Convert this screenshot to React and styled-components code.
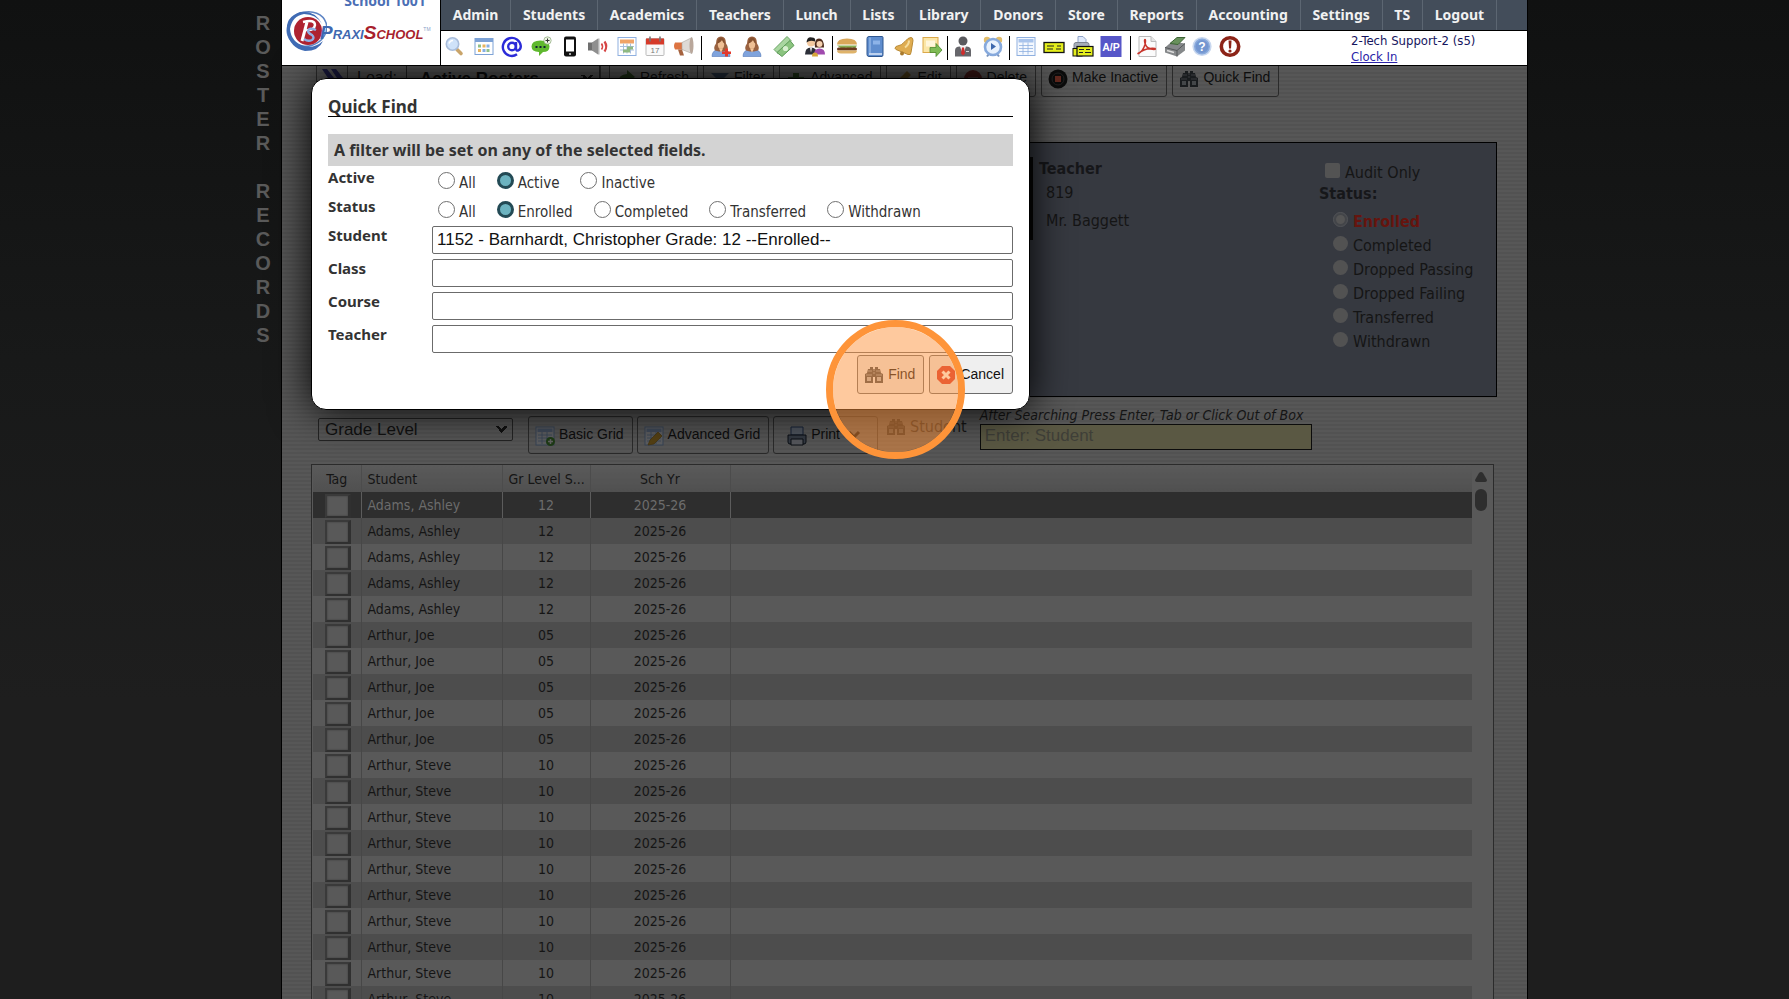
import React from "react";
import styled, { createGlobalStyle, css } from "styled-components";

const ui = `Tahoma, "DejaVu Sans Condensed", "Noto Sans", sans-serif`;
const uiBold = `"Noto Sans", Tahoma, sans-serif`;
const arial = `Arial, "Liberation Sans", sans-serif`;

const GlobalStyle = createGlobalStyle`
  * { box-sizing: border-box; }
  body {
    margin: 0;
    background: linear-gradient(#101111, #181919 360px, #1e1e1e 700px) no-repeat #1e1e1e;
    font-family: ${ui};
    font-size: 14px;
    color: #151515;
  }
  button, input, select { font-family: ${arial}; }
`;

/* ---------- page frame ---------- */

const Page = styled.div`
  display: flex;
  justify-content: center;
  height: 100vh;
  overflow: hidden;
`;

const Rail = styled.h1`
  flex: none;
  width: 32px;
  margin: 0;
  padding: 11px 10px 0 0;
  display: flex;
  flex-direction: column;
  align-items: flex-end;
  font: bold 20px/24px ${arial};
  color: #5a5a5a;
`;

const RailLetter = styled.span`
  width: 16px;
  height: 24px;
  text-align: center;
`;

const Shell = styled.div`
  position: relative;
  flex: 1 1 auto;
  max-width: 1247px;
  margin-right: 12px;
  border: solid #000;
  border-width: 0 1px;
  background: repeating-linear-gradient(#525252 0 2px, #575757 2px 4px);
`;

/* ---------- header ---------- */

const Header = styled.header`
  position: relative;
  z-index: 2;
  display: flex;
  height: 66px;
  background: #fff;
  border-bottom: 1px solid #000;
`;

const Brand = styled.a`
  flex: none;
  width: 159px;
  border-right: 1px solid #000;
  overflow: hidden;
  text-decoration: none;
  display: flex;
  flex-direction: column;
`;

const School = styled.span`
  margin-top: -8px;
  padding-left: 48px;
  text-align: center;
  font: bold 14px/17px ${uiBold};
  color: #4b6fb5;
`;

const LogoRow = styled.span`
  display: flex;
  align-items: center;
  padding-left: 3px;
`;

const Wordmark = styled.span`
  margin-left: -7px;
  padding-top: 2px;
  font: italic bold 19px/20px ${arial};
  font-variant: small-caps;
  color: #3f68b0;
  white-space: nowrap;
`;

const WordmarkRed = styled.span`
  color: #a81f2d;
`;

const Trade = styled.sup`
  font: 5px/6px ${arial};
  color: #8aa0c8;
  vertical-align: 8px;
`;

const HeaderMain = styled.div`
  flex: 1;
  min-width: 0;
`;

const Menu = styled.nav`
  display: flex;
  height: 31px;
  padding-right: 30px;
  background: #434d5a;
  border-bottom: 1px solid #000;
`;

const MenuLink = styled.a`
  flex: 1 1 auto;
  padding: 0 11px;
  border-right: 1px solid #5c6672;
  font: bold 14px/30px ${uiBold};
  text-align: center;
  color: #f1f1f1;
  text-decoration: none;
  white-space: nowrap;
`;

const Tools = styled.div`
  display: flex;
  align-items: flex-start;
  height: 34px;
  padding: 5px 0 0 4px;
`;

const ToolGroup = styled.div`
  display: flex;
  justify-content: space-between;
  width: ${(p) => p.$width}px;
`;

const ToolButton = styled.button`
  width: 20px;
  height: 21px;
  padding: 0;
  border: 0;
  background: none;
  svg { display: block; width: 20px; height: 21px; overflow: visible; }
`;

const Divider = styled.span`
  width: 1px;
  height: 24px;
  margin: 0 ${(p) => p.$after}px 0 ${(p) => p.$before}px;
  background: #000;
`;

const Account = styled.div`
  margin: -3px 0 0 111px;
  font: 13px/16px ${ui};
  color: #15155e;
  white-space: nowrap;
`;

const ClockIn = styled.a`
  display: block;
  width: max-content;
  color: #2a22a8;
`;

/* ---------- record area ---------- */

const Content = styled.main`
  margin-top: -7px;
  padding: 0 30px 0 29px;
`;

const ActionBar = styled.div`
  display: flex;
  padding-left: 5px;
`;

const LoadBox = styled.div`
  display: flex;
  align-items: center;
  height: 38px;
  margin-right: 8px;
  border: 1px solid #2c2c2c;
  color: #111;
`;

const LoadArrow = styled.button`
  width: 31px;
  height: 36px;
  padding: 0;
  border: 0;
  border-right: 1px solid #2c2c2c;
  background: none;
  svg { display: block; width: 24px; height: 20px; margin: 0 auto; }
`;

const LoadLabel = styled.label`
  width: 58px;
  padding-left: 9px;
  font: 16px/20px ${arial};
`;

const chevron = css`
  appearance: none;
  background-color: transparent;
  background-image: linear-gradient(45deg, transparent 50%, #111 50% 72%, transparent 72%),
    linear-gradient(-45deg, transparent 50%, #111 50% 72%, transparent 72%);
  background-repeat: no-repeat;
  background-size: 7px 7px;
`;

const RosterSelect = styled.select`
  ${chevron}
  width: 194px;
  height: 26px;
  padding: 0 0 0 13px;
  border: 1px solid #222;
  background-position: right 11px center, right 5px center;
  font-size: 17px;
  font-weight: bold;
  color: #0c0c0c;
`;

const Buttons = styled.div`
  display: flex;
  gap: ${(p) => p.$gap}px;
`;

const Button = styled.button`
  display: flex;
  align-items: center;
  gap: 4px;
  height: ${(p) => (p.$bright ? 39 : 38)}px;
  padding-block: 0 2px;
  padding-inline: ${(p) => (p.$roomy ? "13px" : "6px 8px")};
  border: 1px solid ${(p) => (p.$bright ? "#6b6b6b" : "#2a2a2a")};
  border-radius: 3px;
  background: ${(p) => (p.$bright ? "#efefef" : "transparent")};
  font-size: 14px;
  line-height: 20px;
  color: ${(p) => (p.$bright ? "#111" : "#0d0d0d")};
  white-space: nowrap;
  svg {
    flex: none;
    width: 20px;
    height: 20px;
    filter: ${(p) => (p.$bright ? "none" : "brightness(0.38)")};
  }
  svg:first-child { margin-top: 3px; }
`;

const Panel = styled.section`
  display: grid;
  grid-template-columns: 1fr 286px 177px;
  margin-top: 45px;
  min-height: 255px;
  padding-top: 14px;
  border: 1px solid #000;
  background: #363940;
  font-size: 16px;
  line-height: 24px;
`;

const ClassColumn = styled.div`
  height: 83px;
  border-right: 3px solid #060606;
`;

const TeacherColumn = styled.div`
  padding-left: 6px;
`;

const PanelHeading = styled.h2`
  margin: 0;
  font: bold 16px/24px "DejaVu Sans Condensed", ${uiBold};
  color: #16171a;
`;

const TeacherLine = styled.p`
  margin: 0;
  padding: 0 0 4px 7px;
`;

const StatusColumn = styled.div`
  padding-top: 2px;
`;

const PanelCheck = styled.label`
  display: flex;
  align-items: flex-start;
  gap: 5px;
  height: 23px;
  padding-left: 6px;
  line-height: 28px;
`;

const DimBox = styled.input`
  appearance: none;
  width: 15px;
  height: 15px;
  margin: 4px 0 0;
  border-radius: 2px;
  background: #535353;
`;

const PanelRadio = styled.label`
  display: flex;
  align-items: center;
  gap: 5px;
  height: 24px;
  padding-left: 14px;
  font-weight: ${(p) => (p.$on ? "bold" : "normal")};
  color: ${(p) => (p.$on ? "#66140e" : "inherit")};
`;

const DimRadio = styled.input`
  appearance: none;
  width: 15px;
  height: 15px;
  margin: 0 0 6px;
  border-radius: 50%;
  background: #525252;
  &:checked {
    background: #555;
    border: 3px solid #434549;
    outline: 1px solid #505256;
    outline-offset: -1px;
  }
`;

const StatusList = styled.div`
  padding-top: 4px;
`;

/* ---------- grid controls ---------- */

const GridBar = styled.div`
  display: flex;
  align-items: flex-start;
  padding: 10px 0 10px 7px;
`;

const LevelSelect = styled.select`
  ${chevron}
  width: 195px;
  height: 23px;
  margin: 11px 15px 0 0;
  padding: 0 0 0 6px;
  border: 1px solid #242424;
  border-radius: 2px;
  background-position: right 10px center, right 4px center;
  font-size: 17px;
  line-height: 20px;
  color: #111;
`;

const GridButtons = styled(Buttons)`
  margin-top: 9px;
`;

const StudentTag = styled.span`
  display: flex;
  align-items: center;
  gap: 4px;
  margin: 8px 13px 0 8px;
  font-size: 16px;
  line-height: 24px;
  svg { width: 20px; height: 20px; filter: brightness(0.38); }
`;

const Search = styled.label`
  display: block;
  width: 332px;
  font: italic 14px/17px ${ui};
  white-space: nowrap;
`;

const SearchInput = styled.input`
  display: block;
  width: 100%;
  height: 26px;
  padding: 0 4px 2px;
  border: 1px solid #0c0c0c;
  background: #5a5843;
  font-size: 17px;
  &::placeholder { color: #3f3f38; opacity: 1; }
`;

const GridFrame = styled.div`
  display: flex;
  margin-right: 3px;
  padding-left: 1px;
  border: 1px solid #2b2b2b;
  background: #595959;
`;

const Table = styled.table`
  flex: 1;
  width: 0;
  table-layout: fixed;
  border-collapse: collapse;
  font-size: 14px;
`;

const Col = styled.col`
  width: ${(p) => (p.$w ? `${p.$w}px` : "auto")};
`;

const HeadCell = styled.th`
  height: 27px;
  padding: 0 6px;
  border-right: 1px solid #4c4c4c;
  background: linear-gradient(#5a5a5a, #505050);
  font-weight: normal;
  text-align: ${(p) => (p.$left ? "left" : "center")};
  white-space: nowrap;
  overflow: hidden;
  &:last-child { border-right: 0; }
`;

const Row = styled.tr`
  height: 26px;
  background: ${(p) => (p.$selected ? "#2e2e2e" : p.$alt ? "#4d4d4d" : "#595959")};
  color: ${(p) => (p.$selected ? "#6c6c6c" : "#151515")};
`;

const Cell = styled.td`
  height: 26px;
  padding: ${(p) => (p.$tight ? "0 0 0 12px" : "0 6px")};
  border-right: 1px solid ${(p) => (p.$selected ? "#5c5c5c" : "#474747")};
  text-align: ${(p) => (p.$left ? "left" : "center")};
  line-height: 24px;
  &:last-child { border-right: 0; }
`;

const TagBox = styled.input`
  appearance: none;
  display: block;
  width: 26px;
  height: 24px;
  margin: 2px 0 0;
  border: 2px solid #3a3a3a;
  border-right: 3px solid #303030;
  border-bottom-color: #303030;
  background: #595959;
  box-shadow: inset 0 0 2px #3a3a3a;
`;

const ScrollTrack = styled.div`
  width: 21px;
  padding: 7px 3px 0 0;
  display: flex;
  flex-direction: column;
  align-items: center;
  gap: 7px;
  svg { width: 12px; height: 10px; }
`;

const ScrollThumb = styled.div`
  width: 12px;
  height: 22px;
  border-radius: 6px;
  background: #2e2e2e;
`;

/* ---------- quick find dialog ---------- */

const Dialog = styled.form`
  position: absolute;
  z-index: 1;
  top: 78px;
  left: 29px;
  width: 719px;
  max-width: calc(100% - 58px);
  padding: 19px 16px 15px;
  border: 1px solid #000;
  border-radius: 15px;
  background: #fff;
  box-shadow: 0 0 40px #000;
  color: #333;
`;

const DialogTitle = styled.h2`
  margin: 0 0 17px;
  border-bottom: 1px solid #000;
  font: bold 17px/18px ${uiBold};
`;

const Notice = styled.p`
  margin: 0;
  padding: 0 6px;
  background: #d3d3d3;
  font: bold 16px/32px ${uiBold};
`;

const Field = styled.div`
  display: grid;
  grid-template-columns: 104px 1fr;
  height: ${(p) => (p.$choices ? 29 : 33)}px;
`;

const FieldName = styled.label`
  font: bold 15px/22px ${uiBold};
`;

const Choices = styled.div`
  display: flex;
  gap: 21px;
  padding: 4px 0 0 6px;
`;

const Choice = styled.label`
  display: flex;
  align-items: flex-start;
  gap: 4px;
  font-size: 15px;
  line-height: 27px;
`;

const Radio = styled.input`
  appearance: none;
  width: 17px;
  height: 17px;
  margin: 2px 0 0;
  border: 1px solid #6f6f6f;
  border-radius: 50%;
  background: #fff;
  &:checked {
    border: 3px solid #234a55;
    background: #6cb3c0;
  }
`;

const TextInput = styled.input`
  width: 100%;
  height: 28px;
  margin-top: 2px;
  padding: 0 4px;
  border: 1px solid #6b6b6b;
  border-radius: 2px;
  font-size: 17px;
  color: #111;
`;

const DialogActions = styled.div`
  display: flex;
  justify-content: flex-end;
  gap: 5px;
  margin-top: -1px;
`;

const ClickMarker = styled.div`
  position: absolute;
  right: 64px;
  bottom: -50px;
  width: 139px;
  height: 139px;
  border: 7px solid #fe9439;
  border-radius: 50%;
  background: rgba(253, 148, 62, 0.5);
  background-clip: padding-box;
  pointer-events: none;
`;

/* ---------- icons ---------- */

const Svg = ({ children, box = "0 0 20 20" }) => (
  <svg viewBox={box} aria-hidden="true">{children}</svg>
);

const Binoculars = () => (
  <Svg>
    <path d="M4 4h2V2h3v2h2V2h3v2h2l1 4 2 1v9h-8v-6H9v6H1V9l2-1z" fill="#43494f" />
    <path d="M3 12h4v4H3zM13 12h4v4h-4z" fill="#b4babf" />
    <path d="M4 6h4M12 6h4M2 10h6M12 10h6M9 5h2M9 8h2" stroke="#959ca3" />
  </Svg>
);

const Person = ({ plus }) => (
  <Svg>
    <path d="M1 20q0-6 6-7h6q6 1 6 7z" fill="#7fa3dc" stroke="#5478b8" strokeWidth=".6" />
    <path d="M4 14Q2 11 5 7 5 0 10 0t5 7q3 4 1 7l-4 1H8z" fill="#9a6240" />
    <ellipse cx="10" cy="8" rx="3.2" ry="4.2" fill="#eebf94" />
    <path d="M6 7q4-1 5-4 1 4 3 4-1-6-4-6T6 7z" fill="#86512f" />
    <path d="M8 12l2 4 2-4z" fill="#f5c79a" />
    {plus && <path d="M14 12h3v3h3v2.500h-3V20h-3v-2.500h-3V15h3z" fill="#e23a2c" />}
  </Svg>
);

const Sheet = ({ tone = "#8fb0e0" }) => (
  <>
    <rect x="1" y="1" width="18" height="18" fill="#f4f8fe" stroke={tone} />
    <rect x="2.500" y="2.500" width="15" height="3.500" fill="#a9c4ec" />
    <path d="M3 9h14M3 12h14M3 15h14M7 6v12M12 6v12" stroke={tone} strokeWidth=".8" />
  </>
);

const Cheque = () => (
  <>
    <rect x="0" y="6" width="20" height="10" fill="#e4ee1c" stroke="#111" strokeWidth="1.300" />
    <path d="M3 9.500h7M3 12.500h6M13 9.500h4M12 12.500h5" stroke="#222" />
  </>
);

const icons = {
  search: (
    <Svg>
      <path d="M12 13l4 4" stroke="#c9a46a" strokeWidth="3.600" strokeLinecap="round" />
      <circle cx="7.500" cy="7.500" r="6.200" fill="#cfe2f9" stroke="#a9bddb" strokeWidth="1.600" />
      <path d="M4 7q1-3 4-3" stroke="#fff" strokeWidth="1.500" fill="none" />
    </Svg>
  ),
  board: (
    <Svg>
      <rect x="1" y="2" width="18" height="16" fill="#fff" stroke="#7da2d6" />
      <rect x="1" y="2" width="18" height="3.500" fill="#7da2d6" />
      <path d="M4 8h3v3H4zM12.500 12.500h3v3h-3z" fill="#8fc08a" />
      <path d="M8.500 8h3v3h-3zM4 12.500h3v3H4z" fill="#e8b35a" />
      <path d="M12.500 8h3v3h-3zM8.500 12.500h3v3h-3z" fill="#85aee3" />
    </Svg>
  ),
  at: (
    <Svg>
      <circle cx="10" cy="10" r="3.800" fill="none" stroke="#2b2bd8" strokeWidth="2.400" />
      <path d="M14 5.500v6q0 3 2.200 2.500 2.600-1 2.600-4.500A9 9 0 1 0 15 17.800" fill="none" stroke="#2b2bd8" strokeWidth="2.400" />
    </Svg>
  ),
  chat: (
    <Svg>
      <path d="M9.500 4q9 0 9 6 0 5.500-6.500 5.500L8 19.500v-4Q.5 15 .5 10q0-6 9-6z" fill="#5fb82e" />
      <path d="M4.500 10.500h2M8.500 10.500h2M12.500 10.500h2" stroke="#123" strokeWidth="2" />
      <circle cx="16.500" cy="4" r="3.700" fill="#eef6e4" stroke="#8aa67a" strokeWidth=".7" />
      <path d="M16.500 2v4M14.500 4h4" stroke="#333" />
    </Svg>
  ),
  phone: (
    <Svg>
      <rect x="4" y="0" width="12" height="20" rx="2" fill="#111" />
      <rect x="6" y="3" width="8" height="12" fill="#fff" />
      <circle cx="10" cy="17.500" r="1" fill="#ddd" />
    </Svg>
  ),
  speaker: (
    <Svg>
      <path d="M0 6h5v8H0z" fill="#6f6f6f" />
      <path d="M4 6l6-4v16l-6-4z" fill="#8f8f8f" />
      <path d="M10 2h1.500v16H10z" fill="#b5b5b5" />
      <path d="M13.500 7q2 3 0 6" fill="none" stroke="#d64545" strokeWidth="1.600" />
      <path d="M16.500 5q3.500 5 0 10" fill="none" stroke="#d64545" strokeWidth="2.200" />
    </Svg>
  ),
  planner: (
    <Svg>
      <rect x="1" y="1" width="18" height="18" fill="#fff" stroke="#8fb0e0" />
      <rect x="3" y="3" width="14" height="4" fill="#f0a468" />
      <path d="M3 10h14M3 13.500h14M6.500 7v10M10 7v10M13.500 7v10" stroke="#a8bfdf" />
      <path d="M10 10h6v3h-3v3H6v-3h4z" fill="#8fb981" />
    </Svg>
  ),
  calendar: (
    <Svg>
      <rect x="1" y="2" width="18" height="17" rx="1" fill="#fafafa" stroke="#bbb" />
      <path d="M1 2h18v6H1z" fill="#d63b2a" />
      <path d="M5 0v5M15 0v5" stroke="#777" strokeWidth="1.600" />
      <text x="10" y="16.500" fontSize="8" textAnchor="middle" fill="#777" fontFamily="Liberation Sans">17</text>
    </Svg>
  ),
  megaphone: (
    <Svg>
      <path d="M1 6h8v7H1q-2-3.500 0-7z" fill="#dd7442" />
      <path d="M8 6l10-5v16L8 13z" fill="#dedad6" stroke="#a9a29a" strokeWidth=".6" />
      <ellipse cx="17.500" cy="9" rx="2" ry="8" fill="#b9a79b" />
      <path d="M4 13h4l2 6H6z" fill="#a5623f" />
    </Svg>
  ),
  addPerson: <Person plus />,
  person: <Person />,
  money: (
    <Svg>
      <path d="M0 13L13 0l4 4L4 17z" fill="#a9d6a0" stroke="#6aa465" />
      <path d="M3 16L16 4l4 5L8 20z" fill="#8bc47f" stroke="#5c9a58" />
      <circle cx="11.500" cy="12" r="2.600" fill="#d8efd0" />
    </Svg>
  ),
  group: (
    <Svg>
      <circle cx="6" cy="6" r="4" fill="#f3c9a0" />
      <path d="M1.500 6Q2 0 7 1q4 0 3 4-5-2-8.500 1z" fill="#222" />
      <path d="M0 18q0-7 6-7t6 7z" fill="#2c2f38" />
      <path d="M5 11h2l-1 5z" fill="#fff" />
      <path d="M10 11q-1-9 4-9t5 9z" fill="#4e2c1c" />
      <circle cx="14.500" cy="7.500" r="3" fill="#f6d2b0" />
      <path d="M9 18q0-6 5.500-6T20 18z" fill="#a04aae" />
      <path d="M7 20q0-4 3-4t3 4z" fill="#d6a63a" />
    </Svg>
  ),
  burger: (
    <Svg>
      <path d="M0 8q0-6 10-6t10 6z" fill="#d9a75a" />
      <path d="M0 9h20l-2 3-3-1-3 2-3-2-3 2-3-2z" fill="#86ad52" />
      <rect x="0" y="11" width="20" height="3" rx="1.500" fill="#6b3a1d" />
      <path d="M0 14h20q0 3-4 3H4q-4 0-4-3z" fill="#dfb36a" />
    </Svg>
  ),
  book: (
    <Svg>
      <path d="M4 0h13q1 0 1 1v17q0 2-1 2H4q-2 0-2-2V2q0-2 2-2z" fill="#5f8dce" stroke="#2e568f" />
      <path d="M5 1v16" stroke="#a9c8f0" />
      <path d="M8 4h7v4H8z" fill="#8db3e8" />
      <path d="M4 17.500h13" stroke="#dce8f8" strokeWidth="1.500" />
    </Svg>
  ),
  bell: (
    <Svg>
      <path d="M17 1q2 0 2 3l-2 12q0 3-3 2L2 13q-2-1 0-3 6-1 9-5 3-4 6-4z" fill="#dfac50" stroke="#b98a35" />
      <path d="M15 4q0 4-4 7" stroke="#f6dc9c" strokeWidth="2" fill="none" />
      <circle cx="8" cy="17" r="2" fill="#a97a2c" />
    </Svg>
  ),
  note: (
    <Svg>
      <rect x="1" y="1" width="15" height="15" fill="#fbe6a8" stroke="#dba94a" />
      <path d="M4 4h9v6H4z" fill="#fff6da" />
      <path d="M8 11h6V7l6 6.500-6 6.500v-4H8z" fill="#7fbb55" stroke="#4d8a31" strokeWidth=".8" />
    </Svg>
  ),
  staff: (
    <Svg>
      <circle cx="10" cy="4.500" r="4.500" fill="#5a5a5e" />
      <path d="M2 20V14q0-4 5-4l3 2 3-2q5 0 5 4v6z" fill="#66666b" />
      <path d="M7 10h6l-3 8z" fill="#eee" />
      <path d="M9 11h2l1 6-2 2-2-2z" fill="#cf2b2b" />
      <path d="M13 15h3" stroke="#d8d8d8" />
    </Svg>
  ),
  clock: (
    <Svg>
      <circle cx="4" cy="3.500" r="3.200" fill="#e2bd6a" />
      <circle cx="16" cy="3.500" r="3.200" fill="#e2bd6a" />
      <path d="M4 20l3-4M16 20l-3-4" stroke="#7793bd" strokeWidth="2" />
      <circle cx="10" cy="10.500" r="8" fill="#e9f2fd" stroke="#86a9dc" strokeWidth="2.600" />
      <path d="M8 6.500v7l5-3.500z" fill="#3d68ad" />
    </Svg>
  ),
  sheet: <Svg><Sheet /></Svg>,
  cheque: <Svg><Cheque /></Svg>,
  printCheque: (
    <Svg>
      <path d="M5 8V0h5l3 3v5z" fill="#dfe9fb" stroke="#8fa3c8" />
      <path d="M1 8q0-2 2-2h11q2 0 2 2v6H1z" fill="#a6adb8" stroke="#7c838f" />
      <rect x="0" y="12" width="9" height="7.500" fill="#e4ee1c" stroke="#111" />
      <rect x="4" y="10" width="16" height="9.500" fill="#e4ee1c" stroke="#111" strokeWidth="1.200" />
      <path d="M6 13h5M13 13h4M6 16h4M12 16h6" stroke="#222" />
    </Svg>
  ),
  payable: (
    <Svg>
      <rect x="-.5" y="-.5" width="21" height="21" fill="#5656c8" />
      <text x="10" y="14" fontSize="10.500" fontWeight="bold" textAnchor="middle" fill="#fff" fontFamily="Liberation Sans">A/P</text>
    </Svg>
  ),
  pdf: (
    <Svg>
      <path d="M2 0h12l5 5v15H2z" fill="#fbfbfb" stroke="#bbb" />
      <path d="M14 0v5h5" fill="#e5e5e5" stroke="#bbb" />
      <path d="M1 17q5-2 7-9 1-5 0-5t0 4q2 6 9 6 2 0 1-1-6-1-14 3-3 3-3 2z" fill="none" stroke="#c8352c" strokeWidth="1.500" />
    </Svg>
  ),
  cashier: (
    <Svg>
      <path d="M0 11l7-6 13 2v7l-8 6L0 16z" fill="#85888a" />
      <path d="M0 11l12 3 8-7M12 14v6" stroke="#55585a" fill="none" />
      <path d="M5 7l7-6 8 0-7 7z" fill="#68915c" stroke="#3c6334" />
      <path d="M2 14l7 2" stroke="#ddd" strokeWidth="1.500" />
    </Svg>
  ),
  help: (
    <Svg>
      <circle cx="10" cy="10" r="8.800" fill="#88a9dc" stroke="#c9d8ef" strokeWidth="1.600" />
      <circle cx="10" cy="10" r="6.500" fill="#7396d0" />
      <text x="10" y="14.500" fontSize="12" fontWeight="bold" textAnchor="middle" fill="#fff" fontFamily="Liberation Sans">?</text>
    </Svg>
  ),
  alert: (
    <Svg>
      <circle cx="10" cy="10" r="8.700" fill="#fff" stroke="#8c2418" strokeWidth="3.600" />
      <path d="M8.500 4h3l-.5 8H9z" fill="#8c2418" />
      <circle cx="10" cy="14.500" r="1.600" fill="#8c2418" />
    </Svg>
  ),
  refresh: (
    <Svg>
      <path d="M3 17q-3-11 8-12V1l8 7-8 6v-4q-6 0-8 7z" fill="#4e7f3a" />
    </Svg>
  ),
  funnel: (
    <Svg>
      <path d="M1 4h18l-7 7v8l-4-3v-5z" fill="#5c7696" />
    </Svg>
  ),
  plus: (
    <Svg>
      <path d="M7 4h6v4h5v6h-5v5H7v-5H2V8h5z" fill="#4e7f3a" />
    </Svg>
  ),
  pencil: (
    <Svg>
      <path d="M2 18l2-6L14 2l4 4L8 16z" fill="#b8903c" />
    </Svg>
  ),
  minus: (
    <Svg>
      <circle cx="10" cy="10" r="9" fill="#a03c38" />
      <path d="M5 8.500h10v3H5z" fill="#ccc" />
    </Svg>
  ),
  stop: (
    <Svg>
      <circle cx="10" cy="10" r="9.500" fill="#1c1c1c" />
      <circle cx="10" cy="10" r="6" fill="none" stroke="#555" />
      <rect x="7" y="7" width="6" height="6" fill="#ff6a50" />
    </Svg>
  ),
  find: <Binoculars />,
  cancel: (
    <Svg>
      <path d="M6 1h8l5 5v8l-5 5H6l-5-5V6z" fill="#d8322a" />
      <path d="M6.500 6.500l7 7M13.500 6.500l-7 7" stroke="#fff" strokeWidth="3" />
    </Svg>
  ),
  basicGrid: (
    <Svg>
      <Sheet />
      <circle cx="15.500" cy="15.500" r="4.500" fill="#4f9a37" />
      <path d="M15.500 13v5M13 15.500h5" stroke="#fff" strokeWidth="1.500" />
    </Svg>
  ),
  advancedGrid: (
    <Svg>
      <Sheet />
      <path d="M4 19l2-5 8-8 4 4-8 8z" fill="#e0ac35" stroke="#a87a18" strokeWidth=".6" />
    </Svg>
  ),
  print: (
    <Svg>
      <path d="M4 9V1h12v8z" fill="#cddcf4" stroke="#3c5c90" />
      <path d="M1 9h18v7q0 2-2 2H3q-2 0-2-2z" fill="#8796ad" stroke="#1a2434" />
      <path d="M4 13h12v6H4z" fill="#dfe6f2" stroke="#1a2434" />
    </Svg>
  ),
  caret: (
    <Svg>
      <path d="M5 8l5 5 5-5" fill="none" stroke="#000" strokeWidth="3" />
    </Svg>
  ),
};

const EmblemSvg = styled.svg`
  flex: none;
  width: 42px;
  height: 46px;
`;

const Emblem = () => (
  <EmblemSvg viewBox="0 0 42 46" aria-hidden="true">
    <ellipse cx="22" cy="20" rx="20" ry="17" fill="none" stroke="#5d84c4" strokeWidth="1.500" transform="rotate(-18 22 20)" />
    <path d="M37 15Q30 1 15 3 0 8 2 23q3 16 18 19 14 0 18-10-9 8-19 5Q6 33 5 20 7 7 19 5q12 0 18 10z" fill="#3f6bb4" />
    <circle cx="23" cy="22" r="14" fill="#ae2230" />
    <path d="M17 32l5-19" stroke="#fff" strokeWidth="3" />
    <path d="M18 13q12-3 12 3-1 6-9 5" fill="none" stroke="#fff" strokeWidth="2.400" />
    <path d="M31 21q-7-3-8 1 0 2 4 4 3 3 0 5-4 2-8-1" fill="none" stroke="#8fb0e6" strokeWidth="2.400" />
  </EmblemSvg>
);

/* ---------- data ---------- */

const menu = ["Admin", "Students", "Academics", "Teachers", "Lunch", "Lists", "Library", "Donors", "Store", "Reports", "Accounting", "Settings", "TS", "Logout"];

const toolGroups = [
  { width: 249, before: 7, after: 9, items: ["search", "board", "at", "chat", "phone", "speaker", "planner", "calendar", "megaphone"] },
  { width: 114, before: 7, after: 4, items: ["addPerson", "person", "money", "group"] },
  { width: 105, before: 5, after: 5, items: ["burger", "book", "bell", "note"] },
  { width: 50, before: 6, after: 6, items: ["staff", "clock"] },
  { width: 105, before: 9, after: 6, items: ["sheet", "cheque", "printCheque", "payable"] },
  { width: 103, items: ["pdf", "cashier", "help", "alert"] },
];

const actions = [
  ["refresh", "Refresh"], ["funnel", "Filter"], ["plus", "Advanced"], ["pencil", "Edit"],
  ["minus", "Delete"], ["stop", "Make Inactive"], ["find", "Quick Find"],
];

const statuses = ["Enrolled", "Completed", "Dropped Passing", "Dropped Failing", "Transferred", "Withdrawn"];

const rows = [
  ...Array(5).fill(["Adams, Ashley", "12"]),
  ...Array(5).fill(["Arthur, Joe", "05"]),
  ...Array(12).fill(["Arthur, Steve", "10"]),
];

const ChoiceField = ({ label, name, options, selected }) => (
  <Field $choices role="radiogroup" aria-label={label}>
    <FieldName as="span">{label}</FieldName>
    <Choices>
      {options.map((o) => (
        <Choice key={o}>
          <Radio type="radio" name={name} defaultChecked={o === selected} />
          {o}
        </Choice>
      ))}
    </Choices>
  </Field>
);

const TextField = ({ label, value = "" }) => (
  <Field>
    <FieldName htmlFor={`find-${label}`}>{label}</FieldName>
    <TextInput id={`find-${label}`} type="text" defaultValue={value} />
  </Field>
);

export default function App() {
  return (
    <Page>
      <GlobalStyle />
      <Rail aria-label="Roster Records">
        {[..."ROSTER RECORDS"].map((c, i) => <RailLetter key={i}>{c}</RailLetter>)}
      </Rail>
      <Shell>
        <Header>
          <Brand href="#home">
            <School>School 1001</School>
            <LogoRow>
              <Emblem />
              <Wordmark>Praxi<WordmarkRed>School</WordmarkRed><Trade>TM</Trade></Wordmark>
            </LogoRow>
          </Brand>
          <HeaderMain>
            <Menu>
              {menu.map((m) => <MenuLink key={m} href={`#${m}`}>{m}</MenuLink>)}
            </Menu>
            <Tools>
              {toolGroups.map((g, i) => (
                <React.Fragment key={i}>
                  <ToolGroup $width={g.width}>
                    {g.items.map((n) => <ToolButton key={n} type="button" aria-label={n}>{icons[n]}</ToolButton>)}
                  </ToolGroup>
                  {g.before && <Divider $before={g.before} $after={g.after} />}
                </React.Fragment>
              ))}
              <Account>
                2-Tech Support-2 (s5)
                <ClockIn href="#clock-in">Clock In</ClockIn>
              </Account>
            </Tools>
          </HeaderMain>
        </Header>

        <Content>
          <ActionBar>
            <LoadBox>
              <LoadArrow type="button" aria-label="Expand">
                <Svg box="0 0 24 20">
                  <path d="M2 1h5l7 9-7 9H2l6-9zM11 1h5l7 9-7 9h-5l6-9z" fill="#1a1a3e" />
                </Svg>
              </LoadArrow>
              <LoadLabel htmlFor="roster">Load:</LoadLabel>
              <RosterSelect id="roster"><option>Active Rosters</option></RosterSelect>
            </LoadBox>
            <Buttons $gap={5}>
              {actions.map(([icon, text]) => <Button key={text} type="button">{icons[icon]}{text}</Button>)}
            </Buttons>
          </ActionBar>

          <Panel>
            <ClassColumn />
            <TeacherColumn>
              <PanelHeading>Teacher</PanelHeading>
              <TeacherLine>819</TeacherLine>
              <TeacherLine>Mr. Baggett</TeacherLine>
            </TeacherColumn>
            <StatusColumn>
              <PanelCheck><DimBox type="checkbox" />Audit Only</PanelCheck>
              <PanelHeading>Status:</PanelHeading>
              <StatusList>
                {statuses.map((s, i) => (
                  <PanelRadio key={s} $on={i === 0}>
                    <DimRadio type="radio" name="record-status" defaultChecked={i === 0} />
                    {s}
                  </PanelRadio>
                ))}
              </StatusList>
            </StatusColumn>
          </Panel>

          <GridBar>
            <LevelSelect aria-label="Sort by"><option>Grade Level</option></LevelSelect>
            <GridButtons $gap={4}>
              <Button type="button">{icons.basicGrid}Basic Grid</Button>
              <Button type="button">{icons.advancedGrid}Advanced Grid</Button>
              <Button type="button" $roomy>{icons.print}Print{icons.caret}</Button>
            </GridButtons>
            <StudentTag><Binoculars />Student</StudentTag>
            <Search>
              After Searching Press Enter, Tab or Click Out of Box
              <SearchInput type="text" placeholder="Enter: Student" />
            </Search>
          </GridBar>

          <GridFrame>
            <Table>
              <colgroup>
                <Col $w={48} /><Col $w={141} /><Col $w={88} /><Col $w={140} /><Col />
              </colgroup>
              <thead>
                <tr>
                  <HeadCell>Tag</HeadCell>
                  <HeadCell $left>Student</HeadCell>
                  <HeadCell>Gr Level S...</HeadCell>
                  <HeadCell>Sch Yr</HeadCell>
                  <HeadCell />
                </tr>
              </thead>
              <tbody>
                {rows.map(([name, level], i) => (
                  <Row key={i} $selected={i === 0} $alt={i % 2 === 1}>
                    <Cell $tight $selected={i === 0}><TagBox type="checkbox" aria-label={`Tag ${name}`} /></Cell>
                    <Cell $left $selected={i === 0}>{name}</Cell>
                    <Cell $selected={i === 0}>{level}</Cell>
                    <Cell $selected={i === 0}>2025-26</Cell>
                    <Cell />
                  </Row>
                ))}
              </tbody>
            </Table>
            <ScrollTrack>
              <Svg box="0 0 12 10"><path d="M6 0q1 0 2 1l4 7q0 2-2 2H2Q0 10 0 8l4-7q1-1 2-1z" fill="#2e2e2e" /></Svg>
              <ScrollThumb />
            </ScrollTrack>
          </GridFrame>
        </Content>

        <Dialog role="dialog" aria-label="Quick Find" onSubmit={(e) => e.preventDefault()}>
          <DialogTitle>Quick Find</DialogTitle>
          <Notice>A filter will be set on any of the selected fields.</Notice>
          <ChoiceField label="Active" name="find-active" options={["All", "Active", "Inactive"]} selected="Active" />
          <ChoiceField label="Status" name="find-status" options={["All", "Enrolled", "Completed", "Transferred", "Withdrawn"]} selected="Enrolled" />
          <TextField label="Student" value="1152 - Barnhardt, Christopher Grade: 12 --Enrolled--" />
          <TextField label="Class" />
          <TextField label="Course" />
          <TextField label="Teacher" />
          <DialogActions>
            <Button $bright type="submit">{icons.find}Find</Button>
            <Button $bright type="button">{icons.cancel}Cancel</Button>
          </DialogActions>
          <ClickMarker />
        </Dialog>
      </Shell>
    </Page>
  );
}
